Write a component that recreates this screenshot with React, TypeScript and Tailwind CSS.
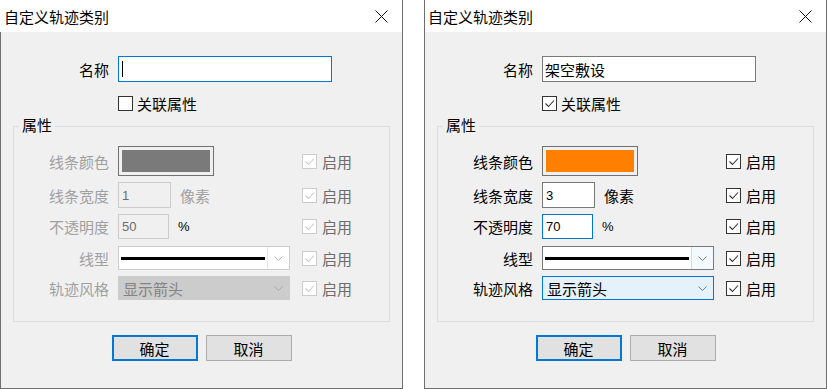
import type { ReactNode } from "react"

// Two copies of the same WinForms-style dialog: disabled state on the left, filled in on the right

function Check({ checked, disabled }: { checked: boolean; disabled?: boolean }) {
  return (
    <span
      className={`flex h-[15px] w-[15px] shrink-0 items-center justify-center border bg-white ${
        disabled ? "border-[#cccccc]" : "border-[#333333]"
      }`}
    >
      {checked && (
        <svg width="11" height="11" viewBox="0 0 11 11">
          <path d="M1.5 5.5L4.5 8.5L10 2.5" fill="none" stroke={disabled ? "#cccccc" : "#333333"} strokeWidth="1.1" />
        </svg>
      )}
    </span>
  )
}

function Chevron({ color }: { color: string }) {
  return (
    <svg width="9" height="5" viewBox="0 0 9 5">
      <path d="M0.5 0.5L4.5 4.5L8.5 0.5" fill="none" stroke={color} strokeWidth="1" />
    </svg>
  )
}

function Row({ label, on, className, children }: { label: string; on: boolean; className: string; children: ReactNode }) {
  return (
    <div className={`flex items-center ${className}`}>
      <span className={`w-[95px] text-right ${on ? "text-black" : "text-[#a0a0a0]"}`}>{label}</span>
      <div className="ml-[9px] flex w-[184px] items-center">{children}</div>
      <Check checked disabled={!on} />
      <span className={`ml-[5px] ${on ? "text-black" : "text-[#6d6d6d]"}`}>启用</span>
    </div>
  )
}

function Dialog({ on, first }: { on: boolean; first?: boolean }) {
  const num = "font-['Liberation_Sans',Arial,sans-serif] text-[13px]"
  return (
    <div className={`flex h-[389px] w-[403px] shrink-0 flex-col border-r border-[#6e6e6e] ${first ? "" : "border-l"}`}>
      {/* Title bar */}
      <div className={`flex h-[32px] shrink-0 items-center justify-between bg-white pr-[14px] ${first ? "pl-[4px]" : "pl-[3px]"}`}>
        <span className="text-black">自定义轨迹类别</span>
        <svg width="13" height="13" viewBox="0 0 13 13">
          <path d="M0.5 0.5L12.5 12.5M12.5 0.5L0.5 12.5" stroke="#111111" strokeWidth="1" />
        </svg>
      </div>

      <div className={`flex flex-1 flex-col border-b border-[#6e6e6e] bg-[#f0f0f0] pt-[24px] ${first ? "border-l" : ""}`}>
        {/* Name */}
        <div className="flex h-[26px] items-center">
          <span className="w-[108px] text-right text-black">名称</span>
          <div
            className={`ml-[9px] flex h-[26px] w-[214px] items-center border bg-white pl-[2px] text-black ${
              on ? "border-[#7a7a7a]" : "border-[#0078d7]"
            }`}
          >
            {on ? "架空敷设" : <span className="ml-[1px] h-[16px] w-px bg-black" />}
          </div>
        </div>

        {/* Linked attributes */}
        <div className="mt-[14px] flex h-[15px] items-center pl-[117px]">
          <Check checked={on} />
          <span className="ml-[4px] text-black">关联属性</span>
        </div>

        {/* Attribute group */}
        <div className="relative mx-[12px] mt-[15px] border border-[#dcdcdc] pt-[19px] pb-[21px]">
          <span className="absolute -top-[10px] left-[5px] bg-[#f0f0f0] px-[3px] leading-[16px] text-black">属性</span>

          <Row label="线条颜色" on={on} className="h-[30px]">
            <div className="h-[30px] w-[96px] border border-[#707070] p-[3px]">
              <div className={`h-full w-full ${on ? "bg-[#ff8000]" : "bg-[#7a7a7a]"}`} />
            </div>
          </Row>

          <Row label="线条宽度" on={on} className="mt-[6px] h-[26px]">
            <div
              className={`flex h-[26px] w-[53px] items-center border pl-[3px] ${num} ${
                on ? "border-[#7a7a7a] bg-white text-black" : "border-[#cccccc] bg-[#f0f0f0] text-[#6d6d6d]"
              }`}
            >
              {on ? "3" : "1"}
            </div>
            <span className={`ml-[9px] ${on ? "text-black" : "text-[#a0a0a0]"}`}>像素</span>
          </Row>

          <Row label="不透明度" on={on} className="mt-[6px] h-[25px]">
            <div
              className={`flex h-[25px] w-[51px] items-center border pl-[3px] ${num} ${
                on ? "border-[#0078d7] bg-white text-black" : "border-[#cccccc] bg-[#f0f0f0] text-[#6d6d6d]"
              }`}
            >
              {on ? "70" : "50"}
            </div>
            <span className={`ml-[9px] text-black ${num}`}>%</span>
          </Row>

          <Row label="线型" on={on} className="mt-[7px] h-[24px]">
            <div className={`flex h-[24px] w-[172px] border bg-white ${on ? "border-[#7a7a7a]" : "border-[#cccccc]"}`}>
              <div className="flex flex-1 items-center px-[2px]">
                <div className="h-[3px] w-full bg-black" />
              </div>
              <div
                className={`flex w-[22px] items-center justify-center border-l ${
                  on ? "border-[#c4ddf3] bg-[#f4f9fe]" : "border-[#e6e6e6] bg-white"
                }`}
              >
                <Chevron color={on ? "#7a7a7a" : "#b0b0b0"} />
              </div>
            </div>
          </Row>

          <Row label="轨迹风格" on={on} className="mt-[6px] h-[24px]">
            <div
              className={`flex h-[24px] w-[172px] items-center justify-between border pl-[4px] pr-[6px] ${
                on ? "border-[#0078d7] bg-[#e5f1fb] text-black" : "border-[#cccccc] bg-[#cccccc] text-[#838383]"
              }`}
            >
              显示箭头
              <Chevron color={on ? "#7a7a7a" : "#a8a8a8"} />
            </div>
          </Row>
        </div>

        {/* Buttons */}
        <div className="mt-[13px] flex justify-center gap-[8px]">
          <div className="flex h-[26px] w-[86px] items-center justify-center border-2 border-[#0078d7] bg-[#e1e1e1] text-black">
            确定
          </div>
          <div className="flex h-[26px] w-[86px] items-center justify-center border border-[#adadad] bg-[#e1e1e1] text-black">
            取消
          </div>
        </div>
      </div>
    </div>
  )
}

export default function App() {
  return (
    <div className="flex h-[389px] w-[827px] gap-[21px] bg-white font-['Noto_Sans_CJK_SC','Noto_Sans',sans-serif] text-[15px] leading-none">
      <Dialog on={false} first />
      <Dialog on />
    </div>
  )
}
